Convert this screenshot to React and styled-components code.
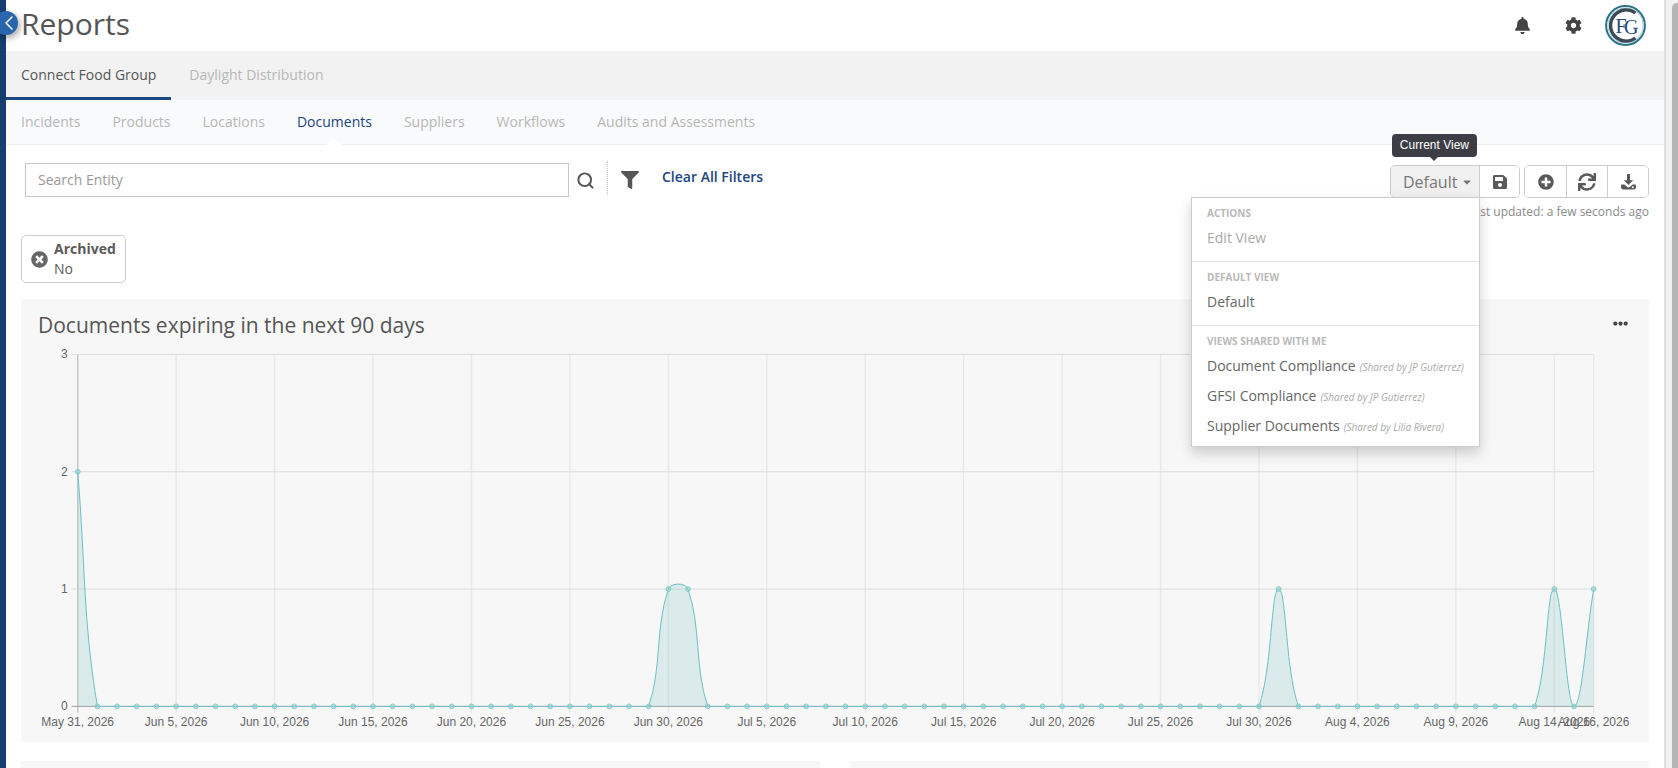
import React from "react";
import styled, { createGlobalStyle } from "styled-components";
import {
  FaBell,
  FaCog,
  FaFilter,
  FaSave,
  FaPlusCircle,
  FaSync,
  FaTimesCircle,
  FaEllipsisH,
  FaCaretDown,
} from "react-icons/fa";
import { FiChevronLeft, FiSearch } from "react-icons/fi";

const GlobalStyle = createGlobalStyle`
  html, body {
    margin: 0;
    padding: 0;
    height: 768px;
    overflow: hidden;
    background: #fff;
  }
  body {
    font-family: "Open Sans", "Liberation Sans", sans-serif;
    color: #555;
  }
  * {
    box-sizing: border-box;
  }
`;

const Page = styled.div`
  display: flex;
  width: 1678px;
  height: 768px;
  overflow: hidden;
`;

const Sidebar = styled.div`
  flex: 0 0 6px;
  background: #163e6f;
`;

const Main = styled.div`
  flex: 1;
  min-width: 0;
  position: relative;
`;

const ScrollTrack = styled.div`
  flex: 0 0 14px;
  background: #f1f1f1;
  border-left: 2px solid #e0e0e0;
  padding: 3px 0 0 6px;
`;

const ScrollThumb = styled.div`
  height: 100%;
  background: #b4b4b4;
  border-top-left-radius: 5px;
`;

const CollapseButton = styled.div`
  position: absolute;
  left: -12px;
  top: 11px;
  width: 24px;
  height: 24px;
  border-radius: 50%;
  background: #2a66ae;
  box-shadow: 2px 3px 6px rgba(0, 0, 0, 0.35);
  color: #fff;
  display: flex;
  align-items: center;
  justify-content: center;
  font-size: 24px;
  z-index: 5;

  svg {
    margin-left: 5px;
    flex: none;
    stroke-width: 1.5;
  }
`;

const Header = styled.header`
  height: 52px;
  border-bottom: 1px solid #eeeeee;
  display: flex;
  align-items: center;
  justify-content: space-between;
  padding: 0 18px 3px 15px;
`;

const Title = styled.h1`
  margin: 0;
  font-size: 30px;
  line-height: 40px;
  font-weight: 400;
  color: #555;
`;

const HeaderIcons = styled.div`
  display: flex;
  align-items: center;
  font-size: 17px;
  color: #444;
  padding-top: 3px;
`;

const HeaderIcon = styled.span`
  display: flex;
  margin-right: ${(p) => p.$gap}px;
`;

const GroupTabs = styled.nav`
  height: 48px;
  background: #f2f2f2;
  display: flex;
`;

const GroupTab = styled.div`
  padding: 0 ${(p) => (p.$active ? 15 : 18)}px;
  font-size: 14px;
  line-height: 45px;
  color: ${(p) => (p.$active ? "#555" : "#b7b7b7")};
  border-bottom: 3px solid ${(p) => (p.$active ? "#1c4a80" : "transparent")};
`;

const SubTabs = styled.nav`
  height: 45px;
  background: #f9fafc;
  border-bottom: 1px solid #eeeeee;
  display: flex;
  gap: 32px;
  padding-left: 15px;
`;

const SubTab = styled.div`
  position: relative;
  font-size: 14px;
  line-height: 44px;
  color: ${(p) => (p.$active ? "#1d4580" : "#b7b7b7")};

  ${(p) =>
    p.$active &&
    `
    &::after {
      content: "";
      position: absolute;
      left: 50%;
      bottom: -1px;
      margin-left: -8px;
      border-left: 8px solid transparent;
      border-right: 8px solid transparent;
      border-bottom: 6px solid #fff;
    }
  `}
`;

const Toolbar = styled.div`
  display: flex;
  justify-content: space-between;
  padding: 18px 15px 0 19px;
  height: 90px;
`;

const SearchArea = styled.div`
  display: flex;
  align-items: flex-start;
`;

const SearchInput = styled.div`
  width: 544px;
  height: 34px;
  border: 1px solid #c8c8c8;
  padding-left: 12px;
  font-size: 14px;
  line-height: 32px;
  color: #999;
`;

const SearchButton = styled.span`
  display: flex;
  width: 38px;
  height: 34px;
  padding-left: 7px;
  align-items: center;
  font-size: 19px;
  color: #555;

  svg {
    stroke-width: 2.5;
  }
`;

const FilterDivider = styled.span`
  width: 1px;
  height: 34px;
  margin-top: -2px;
  border-left: 1px dotted #c4c4c4;
`;

const FilterButton = styled.span`
  display: flex;
  height: 34px;
  padding-left: 13px;
  align-items: center;
  font-size: 18px;
  color: #555;
`;

const ClearFilters = styled.span`
  margin-left: 23px;
  font-size: 14px;
  line-height: 28px;
  font-weight: 600;
  color: #1d4580;
`;

const ActionsColumn = styled.div`
  display: flex;
  flex-direction: column;
  align-items: flex-end;
  position: relative;
  padding-top: 2px;
`;

const ButtonRow = styled.div`
  display: flex;
  gap: 4px;
`;

const ButtonGroup = styled.div`
  display: flex;
  height: 33px;
  border: 1px solid #ccc;
  border-radius: 5px;
  overflow: hidden;
`;

const IconButton = styled.div`
  width: ${(p) => p.$width}px;
  display: flex;
  align-items: center;
  justify-content: center;
  font-size: ${(p) => p.$size || 16}px;
  color: #5a5a5a;
  background: #fff;

  & + & {
    border-left: 1px solid #ccc;
  }
`;

const ViewButton = styled.div`
  width: 89px;
  display: flex;
  align-items: center;
  gap: 4px;
  padding-left: 12px;
  font-size: 16px;
  color: #777;
  background: #f0f0f0;
  border-right: 1px solid #ccc;

  svg {
    font-size: 12px;
  }
`;

const Tooltip = styled.div`
  position: absolute;
  top: -29px;
  right: 172px;
  height: 23px;
  padding: 0 8px;
  border-radius: 4px;
  background: #3d3e45;
  color: #fff;
  font-family: "Liberation Sans", Arial, sans-serif;
  font-size: 12px;
  line-height: 22px;
  white-space: nowrap;

  &::after {
    content: "";
    position: absolute;
    left: 50%;
    bottom: -4px;
    margin-left: -5px;
    border-left: 5px solid transparent;
    border-right: 5px solid transparent;
    border-top: 5px solid #3d3e45;
  }
`;

const LastUpdated = styled.div`
  margin-top: 6px;
  font-size: 12px;
  line-height: 16px;
  color: #8a8a8a;
`;

const Dropdown = styled.div`
  position: absolute;
  top: 34px;
  right: 169px;
  width: 289px;
  height: 250px;
  background: #fff;
  border: 1px solid #ccc;
  box-shadow: 0 6px 12px rgba(0, 0, 0, 0.18);
  z-index: 4;
`;

const DropSection = styled.div`
  padding: 8px 15px 0;
  height: ${(p) => p.$height}px;

  & + & {
    border-top: 1px solid #e2e2e2;
  }
`;

const DropHeading = styled.div`
  font-size: 10px;
  line-height: 14px;
  font-weight: 700;
  color: #b9b9b9;
  margin-bottom: 3px;
`;

const DropItem = styled.div`
  height: 30px;
  font-size: 14px;
  line-height: 30px;
  white-space: nowrap;
  color: ${(p) => (p.$muted ? "#aaa" : "#666")};
`;

const SharedBy = styled.span`
  margin-left: 4px;
  font-size: 10px;
  font-style: italic;
  color: #aaa;
`;

const ChipRow = styled.div`
  padding-left: 15px;
  height: 64px;
`;

const Chip = styled.div`
  display: inline-flex;
  align-items: center;
  gap: 6px;
  width: 105px;
  height: 48px;
  padding-left: 9px;
  border: 1px solid #ccc;
  border-radius: 5px;
  font-size: 14px;
  line-height: 20px;
  color: #5a5a5a;

  > svg {
    font-size: 17px;
    flex: none;
    color: #666;
  }
`;

const ChipLabel = styled.div`
  font-weight: 700;
`;

const ChartPanel = styled.section`
  margin: 0 15px;
  height: 443px;
  background: #f7f7f7;
`;

const ChartHead = styled.div`
  height: 46px;
  padding: 11px 21px 0 17px;
  display: flex;
  justify-content: space-between;
`;

const ChartTitle = styled.h2`
  margin: 0;
  font-size: 21px;
  line-height: 30px;
  font-weight: 400;
  color: #555;
`;

const MoreButton = styled.span`
  display: flex;
  padding-top: 6px;
  font-size: 15px;
  color: #444;
`;

const ChartSvg = styled.svg`
  display: block;
`;

const AxisText = styled.text`
  font-family: "Liberation Sans", Arial, sans-serif;
  font-size: 12px;
  fill: #666;
`;

const LowerPanels = styled.div`
  display: grid;
  grid-template-columns: 1fr 1fr;
  gap: 30px;
  margin: 19px 15px 0;
`;

const LowerPanel = styled.div`
  height: 300px;
  background: #f7f7f7;
`;

const CHART = { left: 77.7, right: 1593.7, top: 354.4, bottom: 706.4 };
const VALUES = Array.from({ length: 78 }, (_, i) =>
  i === 0 ? 2 : [30, 31, 61, 75, 77].includes(i) ? 1 : 0
);
const DATE_LABELS = [
  [0, "May 31, 2026"],
  [5, "Jun 5, 2026"],
  [10, "Jun 10, 2026"],
  [15, "Jun 15, 2026"],
  [20, "Jun 20, 2026"],
  [25, "Jun 25, 2026"],
  [30, "Jun 30, 2026"],
  [35, "Jul 5, 2026"],
  [40, "Jul 10, 2026"],
  [45, "Jul 15, 2026"],
  [50, "Jul 20, 2026"],
  [55, "Jul 25, 2026"],
  [60, "Jul 30, 2026"],
  [65, "Aug 4, 2026"],
  [70, "Aug 9, 2026"],
  [75, "Aug 14, 2026"],
  [77, "Aug 16, 2026"],
];

const xAt = (day) => CHART.left + (day * (CHART.right - CHART.left)) / 77;
const yAt = (v) => CHART.bottom - (v * (CHART.bottom - CHART.top)) / 3;
const clampY = (y) => Math.min(CHART.bottom, Math.max(CHART.top, y));

// same bezier the chart library draws, tension 0.4
function linePath(points) {
  const t = 0.4;
  const ctrl = points.map((p, i) => {
    const prev = points[i - 1] || p;
    const next = points[i + 1] || p;
    const d01 = Math.hypot(p.x - prev.x, p.y - prev.y);
    const d12 = Math.hypot(next.x - p.x, next.y - p.y);
    const total = d01 + d12 || 1;
    const fa = (t * d01) / total;
    const fb = (t * d12) / total;
    return {
      inX: p.x - fa * (next.x - prev.x),
      inY: clampY(p.y - fa * (next.y - prev.y)),
      outX: p.x + fb * (next.x - prev.x),
      outY: clampY(p.y + fb * (next.y - prev.y)),
    };
  });
  let d = `M${points[0].x} ${points[0].y}`;
  for (let i = 1; i < points.length; i++) {
    d += ` C${ctrl[i - 1].outX} ${ctrl[i - 1].outY} ${ctrl[i].inX} ${ctrl[i].inY} ${points[i].x} ${points[i].y}`;
  }
  return d;
}

function ExpiryChart() {
  const points = VALUES.map((v, i) => ({ x: xAt(i), y: yAt(v) }));
  const line = linePath(points);
  const area = `${line} L${CHART.right} ${CHART.bottom} L${CHART.left} ${CHART.bottom} Z`;

  return (
    <ChartSvg width="1628" height="397" viewBox="21 345 1628 397">
      {DATE_LABELS.map(([day]) => (
        <line
          key={day}
          x1={xAt(day)}
          x2={xAt(day)}
          y1={CHART.top}
          y2={CHART.bottom + 6}
          stroke={day === 0 ? "#c4c4c4" : "#e8e8e8"}
          strokeWidth="1.4"
        />
      ))}
      {[3, 2, 1, 0].map((v) => (
        <g key={v}>
          <line
            x1={CHART.left - 6}
            x2={CHART.right}
            y1={yAt(v)}
            y2={yAt(v)}
            stroke={v === 0 ? "#a2a2a2" : "#dcdcdc"}
            strokeWidth="1"
          />
          <AxisText x={CHART.left - 10} y={yAt(v) + 4} textAnchor="end">
            {v}
          </AxisText>
        </g>
      ))}
      {DATE_LABELS.map(([day, label]) => (
        <AxisText key={label} x={xAt(day)} y={726} textAnchor="middle">
          {label}
        </AxisText>
      ))}
      <path d={area} fill="rgba(130, 195, 195, 0.24)" />
      <path d={line} fill="none" stroke="#6cc0c2" strokeWidth="1" />
      {points.map((p, i) => (
        <circle
          key={i}
          cx={p.x}
          cy={p.y}
          r="2.4"
          fill="rgba(130, 205, 205, 0.5)"
          stroke="#8accca"
          strokeWidth="1"
        />
      ))}
    </ChartSvg>
  );
}

function CompanyLogo() {
  return (
    <svg width="41" height="41" viewBox="0 0 41 41">
      <circle cx="20.5" cy="20.5" r="19.4" fill="#fff" stroke="#2a7488" strokeWidth="2" />
      <circle cx="20.5" cy="20.5" r="17.6" fill="#fff" stroke="#a9cfd6" strokeWidth="1" />
      <path
        d="M30.5 8 A15.6 15.6 0 1 0 30.5 33"
        fill="none"
        stroke="#3c4a58"
        strokeWidth="3.4"
      />
      <text x="10.5" y="28" fontFamily="Liberation Serif, serif" fontSize="20" fill="#24477c">
        F
      </text>
      <text x="19" y="29" fontFamily="Liberation Serif, serif" fontSize="20" fill="#24477c">
        G
      </text>
    </svg>
  );
}

function DownloadIcon() {
  return (
    <svg width="17" height="17" viewBox="0 0 17 17" fill="currentColor">
      <path d="M7 1h3v6.2h3.2L8.5 12 3.8 7.2H7z" />
      <path d="M1 12.6c0-.7.5-1.2 1.2-1.2h2.1l3 2.6c.7.6 1.7.6 2.4 0l3-2.6h2.1c.7 0 1.2.5 1.2 1.2v1.6c0 1.2-1 2.2-2.2 2.2H3.2C2 16.4 1 15.4 1 14.2z" />
      <circle cx="12.8" cy="14.2" r="1" fill="#fff" />
    </svg>
  );
}

const SUB_TABS = [
  "Incidents",
  "Products",
  "Locations",
  "Documents",
  "Suppliers",
  "Workflows",
  "Audits and Assessments",
];

const SHARED_VIEWS = [
  ["Document Compliance", "JP Gutierrez"],
  ["GFSI Compliance", "JP Gutierrez"],
  ["Supplier Documents", "Lilia Rivera"],
];

export default function App() {
  return (
    <Page>
      <GlobalStyle />
      <Sidebar />
      <Main>
        <CollapseButton>
          <FiChevronLeft />
        </CollapseButton>
        <Header>
          <Title>Reports</Title>
          <HeaderIcons>
            <HeaderIcon $gap={34}>
              <FaBell />
            </HeaderIcon>
            <HeaderIcon $gap={23}>
              <FaCog />
            </HeaderIcon>
            <CompanyLogo />
          </HeaderIcons>
        </Header>
        <GroupTabs>
          <GroupTab $active>Connect Food Group</GroupTab>
          <GroupTab>Daylight Distribution</GroupTab>
        </GroupTabs>
        <SubTabs>
          {SUB_TABS.map((tab) => (
            <SubTab key={tab} $active={tab === "Documents"}>
              {tab}
            </SubTab>
          ))}
        </SubTabs>
        <Toolbar>
          <SearchArea>
            <SearchInput>Search Entity</SearchInput>
            <SearchButton>
              <FiSearch />
            </SearchButton>
            <FilterDivider />
            <FilterButton>
              <FaFilter />
            </FilterButton>
            <ClearFilters>Clear All Filters</ClearFilters>
          </SearchArea>
          <ActionsColumn>
            <Tooltip>Current View</Tooltip>
            <ButtonRow>
              <ButtonGroup>
                <ViewButton>
                  Default <FaCaretDown />
                </ViewButton>
                <IconButton $width={39}>
                  <FaSave />
                </IconButton>
              </ButtonGroup>
              <ButtonGroup>
                <IconButton $width={41}>
                  <FaPlusCircle />
                </IconButton>
                <IconButton $width={41} $size={18}>
                  <FaSync />
                </IconButton>
                <IconButton $width={41}>
                  <DownloadIcon />
                </IconButton>
              </ButtonGroup>
            </ButtonRow>
            <LastUpdated>Last updated: a few seconds ago</LastUpdated>
            <Dropdown>
              <DropSection $height={63}>
                <DropHeading>ACTIONS</DropHeading>
                <DropItem $muted>Edit View</DropItem>
              </DropSection>
              <DropSection $height={64}>
                <DropHeading>DEFAULT VIEW</DropHeading>
                <DropItem>Default</DropItem>
              </DropSection>
              <DropSection $height={120}>
                <DropHeading>VIEWS SHARED WITH ME</DropHeading>
                {SHARED_VIEWS.map(([name, owner]) => (
                  <DropItem key={name}>
                    {name}
                    <SharedBy>(Shared by {owner})</SharedBy>
                  </DropItem>
                ))}
              </DropSection>
            </Dropdown>
          </ActionsColumn>
        </Toolbar>
        <ChipRow>
          <Chip>
            <FaTimesCircle />
            <div>
              <ChipLabel>Archived</ChipLabel>
              <div>No</div>
            </div>
          </Chip>
        </ChipRow>
        <ChartPanel>
          <ChartHead>
            <ChartTitle>Documents expiring in the next 90 days</ChartTitle>
            <MoreButton>
              <FaEllipsisH />
            </MoreButton>
          </ChartHead>
          <ExpiryChart />
        </ChartPanel>
        <LowerPanels>
          <LowerPanel />
          <LowerPanel />
        </LowerPanels>
      </Main>
      <ScrollTrack>
        <ScrollThumb />
      </ScrollTrack>
    </Page>
  );
}
